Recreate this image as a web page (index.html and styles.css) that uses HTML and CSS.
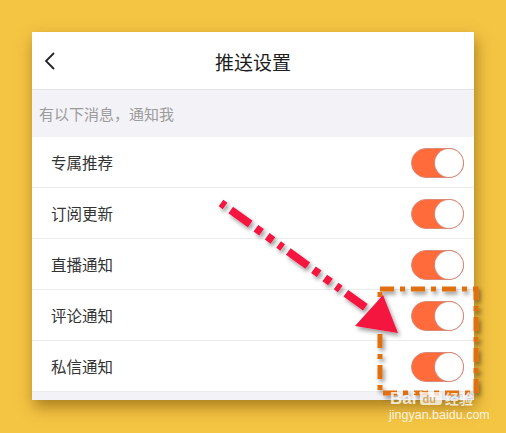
FILE: index.html
```html
<!DOCTYPE html>
<html>
<head>
<meta charset="utf-8">
<link rel="stylesheet" href="styles.css">
</head>
<body>
<div class="stage">
  <div class="card">
    <div class="header">
      <svg class="back" width="14" height="20" viewBox="0 0 14 20"><path d="M11 2 L3 10 L11 18" fill="none" stroke="#222" stroke-width="1.8"/></svg>
      <div class="title">推送设置</div>
    </div>
    <div class="section">有以下消息，通知我</div>
    <div class="row"><span>专属推荐</span><div class="toggle"><div class="knob"></div></div></div>
    <div class="row"><span>订阅更新</span><div class="toggle"><div class="knob"></div></div></div>
    <div class="row"><span>直播通知</span><div class="toggle"><div class="knob"></div></div></div>
    <div class="row"><span>评论通知</span><div class="toggle"><div class="knob"></div></div></div>
    <div class="row"><span>私信通知</span><div class="toggle"><div class="knob"></div></div></div>
    <div class="footer"></div>
  </div>
  <svg class="overlay" width="506" height="433" viewBox="0 0 506 433">
    <defs>
      <filter id="sh" x="-20%" y="-20%" width="140%" height="140%">
        <feDropShadow dx="2" dy="3" stdDeviation="2" flood-color="#000" flood-opacity="0.4"/>
      </filter>
    </defs>
    <g filter="url(#sh)">
      <rect x="380" y="289" width="96" height="104" fill="none" stroke="#e0700e" stroke-width="5" stroke-dasharray="14 6 5 6"/>
      <line x1="221" y1="203" x2="372" y2="312" stroke="#f5123f" stroke-width="8" stroke-dasharray="5 7 24 7 7 7 7 7"/>
      <polygon points="398,333 355,326 383,295" fill="#f5123f"/>
    </g>
    <g class="wm">
      <text x="390" y="404" class="wm1">Bai</text>
      <g class="paw">
        <circle cx="425" cy="389" r="2.2"/>
        <circle cx="431" cy="387" r="2.2"/>
        <circle cx="437" cy="388" r="2.2"/>
        <circle cx="421" cy="393" r="1.8"/>
      </g>
      <rect x="420" y="392" width="22" height="13" rx="3" class="wm-box"/>
      <text x="422.5" y="403" class="wm-du">du</text>
      <text x="445" y="404" class="wm-cn">经验</text>
      <text x="389" y="419" class="wm2">jingyan.baidu.com</text>
    </g>
  </svg>
</div>
</body>
</html>
```
FILE: styles.css
```css
html, body {
  margin: 0;
  padding: 0;
}
body {
  background: #f4c443;
  font-family: "Noto Sans CJK SC", "Noto Sans", sans-serif;
  width: 506px;
  height: 433px;
  overflow: hidden;
}
.stage {
  position: relative;
  width: 506px;
  height: 433px;
  padding: 32px 0 0 32px;
  box-sizing: border-box;
}
.card {
  width: 442px;
  background: #fff;
  box-shadow: 2px 7px 14px rgba(110, 70, 0, 0.55);
}
.header {
  height: 58px;
  border-bottom: 1px solid #e2e1e6;
  box-sizing: border-box;
  display: flex;
  align-items: center;
  justify-content: center;
  position: relative;
}
.back {
  position: absolute;
  left: 11px;
  top: 19px;
}
.title {
  font-size: 19px;
  color: #1d1d1d;
  margin-top: 2px;
}
.section {
  height: 47px;
  background: #f3f2f7;
  color: #9b9b9b;
  font-size: 15px;
  display: flex;
  align-items: center;
  padding-left: 7px;
  box-sizing: border-box;
}
.row {
  height: 51px;
  border-bottom: 1px solid #ececec;
  box-sizing: border-box;
  display: flex;
  align-items: center;
  justify-content: space-between;
  padding: 0 10px 0 19px;
  font-size: 15.5px;
  color: #333;
}
.toggle {
  width: 53px;
  height: 30px;
  border-radius: 15px;
  background: #ff6b3b;
  border: 1px solid #d98a78;
  box-sizing: border-box;
  position: relative;
  margin-top: 2px;
}
.knob {
  position: absolute;
  right: 0;
  top: 0;
  width: 28px;
  height: 28px;
  border-radius: 50%;
  background: #fff;
  box-shadow: 0 0 0 1px #d98a78;
}
.footer {
  height: 8px;
  background: #f3f2f7;
}
.overlay {
  position: absolute;
  left: 0;
  top: 0;
}
.wm {
  fill: rgba(255, 255, 255, 0.8);
}
.wm1 {
  font-family: "Liberation Sans", sans-serif;
  font-weight: bold;
  font-size: 17px;
}
.wm-box {
  fill: rgba(255, 255, 255, 0.75);
}
.wm-du {
  font-family: "Liberation Sans", sans-serif;
  font-weight: bold;
  font-size: 11px;
  fill: rgba(200, 150, 60, 0.8);
}
.wm-cn {
  font-family: "Noto Sans CJK SC", sans-serif;
  font-weight: bold;
  font-size: 14px;
}
.wm2 {
  font-family: "Liberation Sans", sans-serif;
  font-size: 12.5px;
  fill: rgba(255, 255, 255, 0.85);
}
```
